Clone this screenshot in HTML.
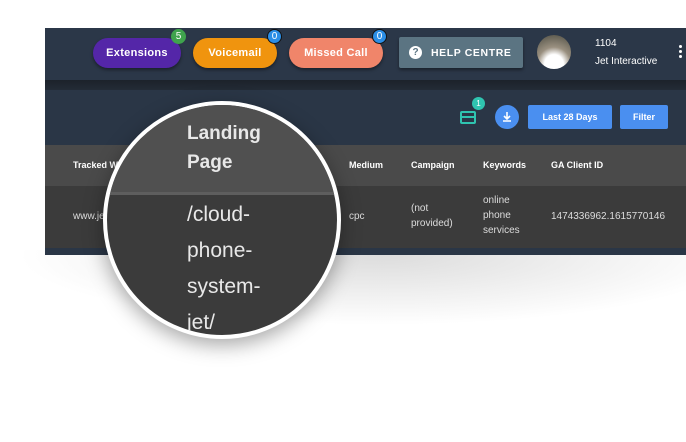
<!DOCTYPE html>
<html><head><meta charset="utf-8"><style>
*{margin:0;padding:0;box-sizing:border-box}
body{width:686px;height:442px;background:#fff;position:relative;overflow:hidden;font-family:"Liberation Sans",sans-serif}
.abs{position:absolute}
.pill{position:absolute;top:38px;height:30px;border-radius:15px;color:#fff;font-size:11px;font-weight:bold;letter-spacing:.3px;display:flex;align-items:center;justify-content:center;box-shadow:0 2px 3px rgba(0,0,0,.4)}
.badge{position:absolute;width:15px;height:15px;border-radius:50%;color:#fff;font-size:10px;display:flex;align-items:center;justify-content:center}
.th{position:absolute;top:160px;color:#fff;font-size:9px;font-weight:bold}
.td{position:absolute;color:#ddd;font-size:10px;line-height:15px}
</style></head><body>
<div class="abs" style="left:0;top:250px;width:686px;height:192px;background:radial-gradient(ellipse 360px 70px at 380px 5px,#dcdcdc,#fff)"></div>
<div class="abs" style="left:45px;top:28px;width:641px;height:52px;background:#2b3748"></div>
<div class="abs" style="left:45px;top:80px;width:641px;height:10px;background:linear-gradient(#1c222a,#232b36)"></div>
<div class="abs" style="left:45px;top:90px;width:641px;height:55px;background:#2a3646"></div>
<div class="abs" style="left:45px;top:145px;width:641px;height:41px;background:#4a4a4a"></div>
<div class="abs" style="left:45px;top:186px;width:641px;height:62px;background:#3b3b3b"></div>
<div class="abs" style="left:45px;top:248px;width:641px;height:7px;background:#2a3646"></div>

<div class="pill" style="left:93px;width:88px;background:#5426a8">Extensions</div>
<div class="badge" style="left:171px;top:29px;background:#3fa34d">5</div>
<div class="pill" style="left:193px;width:84px;background:#f0940e">Voicemail</div>
<div class="badge" style="left:267px;top:29px;background:#2b8ee6;border:1px solid #111">0</div>
<div class="pill" style="left:289px;width:94px;background:#f0856a">Missed Call</div>
<div class="badge" style="left:372px;top:29px;background:#2b8ee6;border:1px solid #111">0</div>
<div class="abs" style="left:399px;top:37px;width:124px;height:31px;background:#5b7482;border-radius:2px;color:#fff;font-size:10.5px;font-weight:bold;letter-spacing:.6px;display:flex;align-items:center;padding-left:10px;box-shadow:0 2px 3px rgba(0,0,0,.4)"><span style="display:inline-block;width:13px;height:13px;border-radius:50%;background:#fff;color:#5b7482;font-size:10px;text-align:center;line-height:13px;margin-right:9px;letter-spacing:0">?</span>HELP CENTRE</div>
<div class="abs" style="left:537px;top:35px;width:34px;height:34px;border-radius:50%;background:radial-gradient(circle at 50% 85%,#fff 28%,#9a9080 50%,#4a4a40)"></div>
<div class="abs" style="left:595px;top:38px;color:#fff;font-size:10px">1104</div>
<div class="abs" style="left:595px;top:56px;color:#fff;font-size:10px">Jet Interactive</div>
<div class="abs" style="left:679px;top:45px;width:3px;height:3px;background:#fff;border-radius:50%;box-shadow:0 5px 0 #fff,0 10px 0 #fff"></div>

<div class="abs" style="left:460px;top:111px;width:16px;height:13px;border:2px solid #2fc4b0;border-radius:2px"><div style="position:absolute;left:0;top:3px;width:12px;height:2px;background:#2fc4b0"></div></div>
<div class="badge" style="left:472px;top:97px;width:13px;height:13px;background:#2fc4b0;font-size:8px">1</div>
<div class="abs" style="left:495px;top:105px;width:24px;height:24px;border-radius:50%;background:#4a8ff0"><svg width="24" height="24" viewBox="0 0 24 24"><path d="M12 7v7M9 11l3 3 3-3M8 16h8" stroke="#fff" stroke-width="1.6" fill="none"/></svg></div>
<div class="abs" style="left:528px;top:105px;width:84px;height:24px;background:#4a8ff0;border-radius:2px;color:#fff;font-size:9px;font-weight:bold;display:flex;align-items:center;justify-content:center">Last 28 Days</div>
<div class="abs" style="left:620px;top:105px;width:48px;height:24px;background:#4a8ff0;border-radius:2px;color:#fff;font-size:9px;font-weight:bold;display:flex;align-items:center;justify-content:center">Filter</div>

<div class="th" style="left:73px">Tracked W</div>
<div class="th" style="left:349px">Medium</div>
<div class="th" style="left:411px">Campaign</div>
<div class="th" style="left:483px">Keywords</div>
<div class="th" style="left:551px">GA Client ID</div>
<div class="td" style="left:73px;top:209px">www.je</div>
<div class="td" style="left:349px;top:209px">cpc</div>
<div class="td" style="left:411px;top:201px">(not<br>provided)</div>
<div class="td" style="left:483px;top:193px">online<br>phone<br>services</div>
<div class="td" style="left:551px;top:209px">1474336962.1615770146</div>

<div class="abs" style="left:103px;top:101px;width:238px;height:238px;border-radius:50%;border:4px solid #fff;overflow:hidden;background:#3b3b3b;box-shadow:0 6px 20px rgba(0,0,0,.35)">
 <div class="abs" style="left:0;top:0;width:100%;height:87px;background:#505050"></div>
 <div class="abs" style="left:0;top:87px;width:100%;height:3px;background:#5e5e5e"></div>
 <div class="abs" style="left:80px;top:14px;color:#e8e8e8;font-size:19px;font-weight:bold;line-height:29px">Landing<br>Page</div>
 <div class="abs" style="left:80px;top:92px;color:#e8e8e8;font-size:21px;line-height:36px">/cloud-<br>phone-<br>system-<br>jet/</div>
</div>
</body></html>
